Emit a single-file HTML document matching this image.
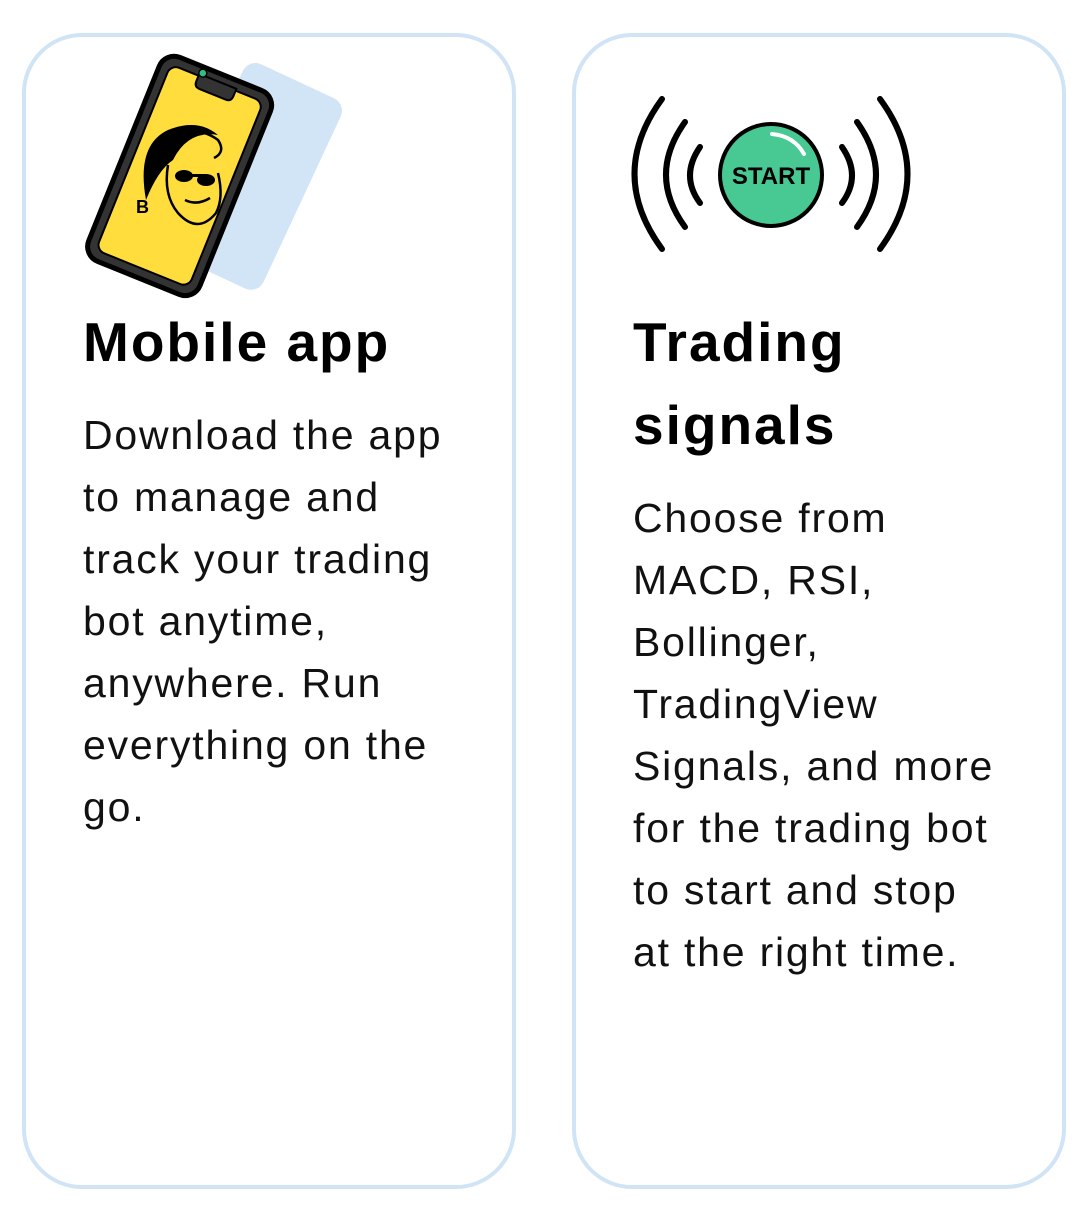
<!DOCTYPE html>
<html><head><style>
body{margin:0;width:1080px;height:1226px;background:#fff;font-family:"Liberation Sans",sans-serif;position:relative;overflow:hidden}
.card{position:absolute;top:33px;width:486px;height:1148px;border:4px solid #d0e4f6;border-radius:60px}
h2{position:absolute;margin:0;font-size:55px;font-weight:bold;line-height:83px;color:#000;letter-spacing:2px}
p{position:absolute;margin:0;font-size:41px;line-height:62px;color:#111;white-space:nowrap;letter-spacing:1.8px}
</style></head><body>
<div class="card" style="left:22px"></div>
<div class="card" style="left:572px"></div>

<svg style="position:absolute;left:0;top:0" width="1080" height="320">
 <g transform="rotate(25 255 175)"><rect x="200" y="72" width="108" height="210" rx="14" fill="#d2e5f7"/></g>
 <g transform="rotate(22 180 175)">
  <rect x="120" y="66" width="120" height="220" rx="16" fill="#333" stroke="#000" stroke-width="5"/>
  <rect x="130" y="76" width="100" height="200" rx="9" fill="#ffdd3c" stroke="#000" stroke-width="2"/>
  <path d="M160 74 h40 v8 q0 6 -6 6 h-28 q-6 0 -6 -6z" fill="#333" stroke="#000" stroke-width="2"/>
  <circle cx="163" cy="72" r="4" fill="#2fbf80" stroke="#000" stroke-width="1.5"/>
 </g>
 <path d="M146 200 q-10 -55 22 -70 q30 -12 50 5 q-30 -5 -45 25 q-15 10 -27 40z" fill="#000"/>
 <g fill="none" stroke="#000" stroke-width="2.5">
  <path d="M168 135 q30 -10 50 5 q8 12 -4 18"/>
  <path d="M168 165 q-5 30 10 48 q20 22 38 0 q8 -15 2 -40"/>
  <path d="M185 200 q12 6 25 -2"/>
 </g>
 <g fill="#000"><ellipse cx="184" cy="176" rx="9" ry="6"/><ellipse cx="206" cy="180" rx="9" ry="6"/><rect x="184" y="174" width="22" height="3"/></g>
 <text x="136" y="213" font-size="18" font-weight="bold" font-family="Liberation Sans">B</text>
 <g fill="none" stroke="#000" stroke-width="6" stroke-linecap="round">
  <path d="M700 147 q-20 29 0 56"/><path d="M842 147 q20 29 0 56"/>
  <path d="M685 122 q-38 53 0 105"/><path d="M857 122 q38 53 0 105"/>
  <path d="M662 99 q-55 75 0 150"/><path d="M880 99 q55 75 0 150"/>
 </g>
 <circle cx="771" cy="175" r="51" fill="#48c994" stroke="#000" stroke-width="4"/>
 <path d="M772 134 q22 2 32 20" fill="none" stroke="#fff" stroke-width="4" stroke-linecap="round"/>
 <text x="771" y="184" text-anchor="middle" font-size="24" font-weight="bold" font-family="Liberation Sans">START</text>
</svg>

<h2 style="left:83px;top:301px">Mobile app</h2>
<p style="left:83px;top:404px">Download the app<br>to manage and<br>track your trading<br>bot anytime,<br>anywhere. Run<br>everything on the<br>go.</p>

<h2 style="left:633px;top:301px">Trading<br>signals</h2>
<p style="left:633px;top:487px">Choose from<br>MACD, RSI,<br>Bollinger,<br>TradingView<br>Signals, and more<br>for the trading bot<br>to start and stop<br>at the right time.</p>
</body></html>
